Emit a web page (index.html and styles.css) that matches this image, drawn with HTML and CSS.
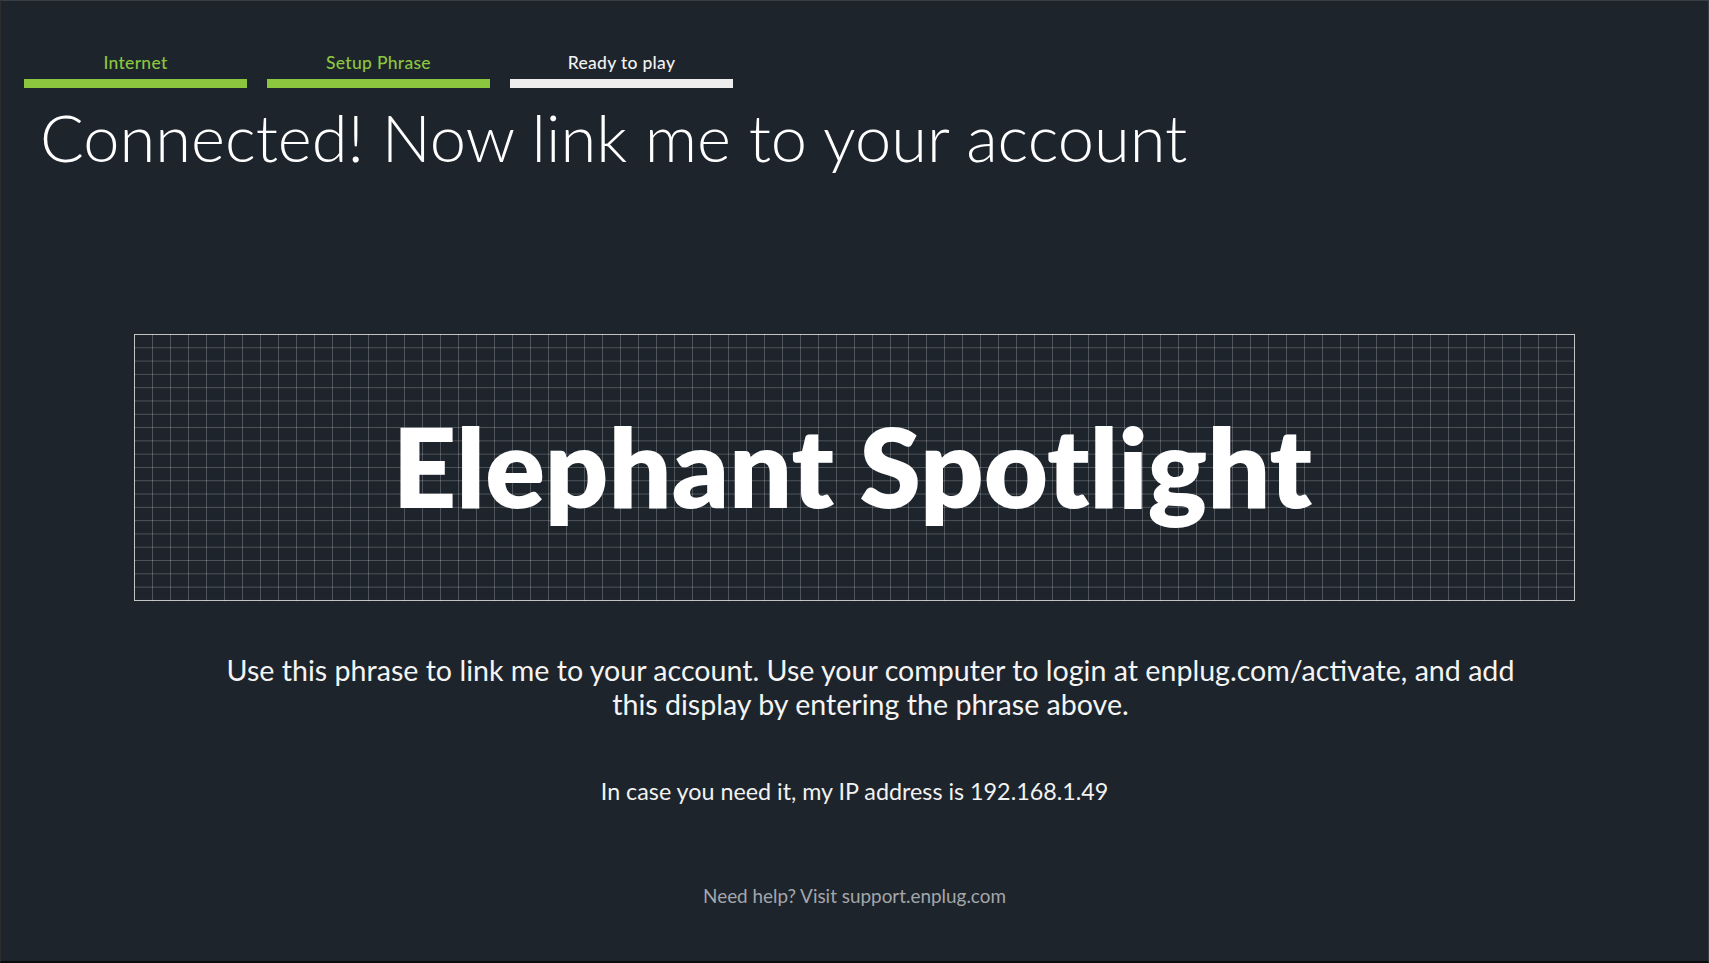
FILE: index.html
```html
<!DOCTYPE html>
<html lang="en">
<head>
<meta charset="utf-8">
<title>Connected! Now link me to your account</title>
<link rel="stylesheet" href="styles.css">
</head>
<body>
<div class="screen">
  <div class="steps">
    <div class="step done"><span class="step-label">Internet</span><span class="step-bar"></span></div>
    <div class="step done"><span class="step-label">Setup Phrase</span><span class="step-bar"></span></div>
    <div class="step current"><span class="step-label">Ready to play</span><span class="step-bar"></span></div>
  </div>
  <h1 class="title">Connected! Now link me to your account</h1>
  <div class="phrase-box">
    <div class="phrase">Elephant Spotlight</div>
  </div>
  <p class="instructions">Use this phrase to link me to your account. Use your computer to login at enplug.com/activate, and add<br>this display by entering the phrase above.</p>
  <p class="ip">In case you need it, my IP address is 192.168.1.49</p>
  <p class="help">Need help? Visit support.enplug.com</p>
</div>
</body>
</html>
```

FILE: styles.css
```css
html, body {
  margin: 0;
  padding: 0;
  background: #1e242c;
}

.screen {
  box-sizing: border-box;
  width: 1709px;
  height: 963px;
  background: #1e242c;
  border-top: 1px solid #3a3e42;
  border-left: 1px solid #2c2d2f;
  border-right: 1px solid #3a3e42;
  border-bottom: 2px solid #0a0b0c;
  display: flex;
  flex-direction: column;
  font-family: "Lato", "Liberation Sans", sans-serif;
  color: #ffffff;
}

.steps {
  display: flex;
  gap: 20px;
  padding: 52px 0 0 23px;
}

.step {
  width: 223px;
  display: flex;
  flex-direction: column;
  align-items: center;
}

.step-label {
  font-size: 17.5px;
  line-height: 20px;
  font-weight: 500;
  letter-spacing: 0.3px;
}

.step.done .step-label {
  color: #8cc63f;
}

.step.current .step-label {
  color: #f2f2f2;
}

.step-bar {
  display: block;
  width: 100%;
  height: 9px;
  margin-top: 6px;
}

.step.done .step-bar {
  background: #8cc63f;
}

.step.current .step-bar {
  background: #eeeeee;
}

.title {
  margin: 10px 0 0 39px;
  font-size: 65px;
  line-height: 78px;
  font-weight: 300;
  letter-spacing: 0;
  color: #ffffff;
}

.phrase-box {
  box-sizing: border-box;
  width: 1441px;
  height: 267px;
  margin: 158px auto 0;
  border: 1px solid rgba(255, 255, 255, 0.65);
  background-image:
    linear-gradient(to right, rgba(255, 255, 255, 0.22) 1px, transparent 1px),
    linear-gradient(to bottom, rgba(255, 255, 255, 0.22) 1px, transparent 1px);
  background-size: 18px 13.3px;
  background-position: -1px -1px;
  display: flex;
  align-items: center;
  justify-content: center;
}

.phrase {
  font-size: 110.8px;
  line-height: 1;
  font-weight: 800;
  color: #ffffff;
  padding: 0 4px 2px 0;
}

.instructions {
  margin: 52px 0 0;
  padding-left: 32px;
  text-align: center;
  font-size: 28.6px;
  line-height: 34px;
  color: #f4f4f4;
}

.ip {
  margin: 55px 0 0;
  text-align: center;
  font-size: 23.3px;
  line-height: 30px;
  color: #f2f2f2;
}

.help {
  margin: 78px 0 0;
  text-align: center;
  font-size: 18.9px;
  line-height: 24px;
  color: #a3a7ab;
}
```
